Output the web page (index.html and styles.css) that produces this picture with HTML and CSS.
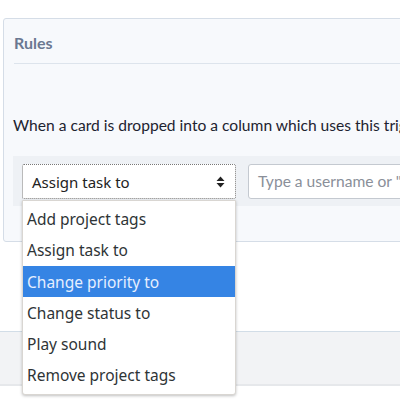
FILE: index.html
```html
<!DOCTYPE html>
<html>
<head>
<meta charset="utf-8">
<link rel="stylesheet" href="styles.css">
</head>
<body>
<div class="page">
  <section class="panel">
    <div class="panel-head">Rules</div>
    <div class="panel-body">
      <p class="desc">When a card is dropped into a column which uses this trigger, these actions will be taken.</p>
      <div class="form-row">
        <div class="select-wrap">
          <div class="select">
            <span>Assign task to</span>
            <svg class="arrows" width="9" height="12" viewBox="0 0 9 12"><path d="M4.5 0.5 L8.5 5 L0.5 5 Z M4.5 11.5 L8.5 7 L0.5 7 Z" fill="#222"/></svg>
          </div>
          <ul class="menu">
            <li>Add project tags</li>
            <li>Assign task to</li>
            <li class="active">Change priority to</li>
            <li>Change status to</li>
            <li>Play sound</li>
            <li>Remove project tags</li>
          </ul>
        </div>
        <div class="input">Type a username or "Only the first user"</div>
      </div>
    </div>
  </section>
  <div class="footer-band"></div>
</div>
</body>
</html>
```

FILE: styles.css
```css
html, body {
  margin: 0;
  padding: 0;
  background: #ffffff;
  overflow: hidden;
}
.page {
  width: 400px;
  height: 400px;
  overflow: hidden;
  padding-top: 18px;
  box-sizing: border-box;
  font-family: Lato, "Liberation Sans", sans-serif;
}
.panel {
  margin-left: 3px;
  width: 520px;
  border: 1px solid #d5dde7;
  border-radius: 3px;
  background: #f7f9fc;
  box-sizing: border-box;
}
.panel-head {
  margin: 0 0 0 10px;
  height: 45px;
  box-sizing: border-box;
  padding-top: 15px;
  border-bottom: 1px solid #dde4ec;
  color: #6a7891;
  font-weight: bold;
  font-size: 16px;
  line-height: 18px;
}
.panel-body {
  padding: 0 0 35px 9px;
}
.desc {
  margin: 0;
  padding-top: 52px;
  white-space: nowrap;
  font-size: 15.6px;
  line-height: 18px;
  color: #1d2330;
}
.form-row {
  margin-top: 22px;
  background: #eef1f5;
  height: 50px;
  padding: 8px 0 0 9px;
  box-sizing: border-box;
  display: flex;
  gap: 12px;
  align-items: flex-start;
}
.select-wrap {
  position: relative;
  width: 214px;
  flex-shrink: 0;
}
.select {
  height: 35px;
  box-sizing: border-box;
  border: 1px dotted #777;
  border-radius: 2px;
  background: #fff;
  display: flex;
  align-items: center;
  justify-content: space-between;
  padding: 0 10px 0 9px;
  font-family: "Noto Sans", "Open Sans", sans-serif;
  font-size: 15px;
  color: #222;
}
.arrows {
  display: block;
}
.menu {
  position: absolute;
  left: 0;
  top: 36px;
  width: 214px;
  margin: 0;
  padding: 2px 0 3px;
  list-style: none;
  background: #fff;
  border: 1px solid #d9d6d2;
  border-radius: 0 0 3px 3px;
  box-shadow: 0 1px 3px rgba(0,0,0,0.25);
  box-sizing: border-box;
  font-family: "Noto Sans", "Open Sans", sans-serif;
  font-size: 15.5px;
  color: #2e3436;
}
.menu li {
  height: 31.3px;
  line-height: 32px;
  padding-left: 4px;
  white-space: nowrap;
}
.menu li.active {
  background: #3584e4;
  color: #e6efff;
}
.input {
  width: 300px;
  flex-shrink: 0;
  height: 35px;
  box-sizing: border-box;
  border: 1px solid #c4c9d0;
  border-radius: 3px;
  background: #fff;
  padding: 0 0 0 9px;
  line-height: 33px;
  white-space: nowrap;
  overflow: hidden;
  font-size: 15.6px;
  color: #8a8f99;
}
.footer-band {
  margin-top: 89px;
  height: 52px;
  border-top: 1px solid #d2dde7;
  border-bottom: 2px solid #e6e8eb;
  background: #f2f3f5;
}
```
